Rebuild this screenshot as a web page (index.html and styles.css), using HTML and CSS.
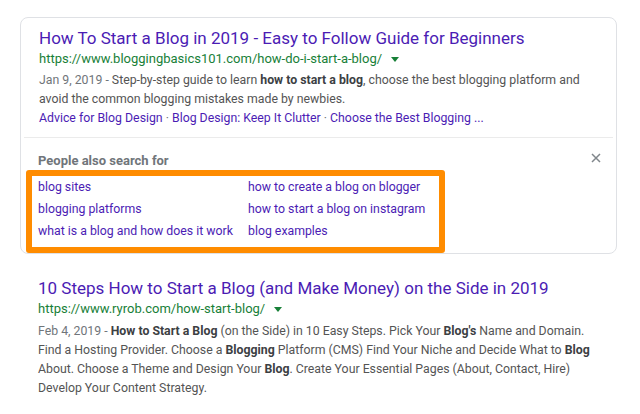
FILE: index.html
```html
<!DOCTYPE html>
<html lang="en">
<head>
<meta charset="utf-8">
<title>Search results</title>
<link rel="stylesheet" href="styles.css">
</head>
<body>
<div class="page">
  <div class="card">
    <div class="result first">
      <a class="title" href="#">How To Start a Blog in 2019 - Easy to Follow Guide for Beginners</a>
      <div class="url">https://www.bloggingbasics101.com/how-do-i-start-a-blog/<span class="caret"></span></div>
      <div class="snippet"><span class="date">Jan 9, 2019 - </span>Step-by-step guide to learn <b>how to start a blog</b>, choose the best blogging platform and avoid the common blogging mistakes made by newbies.</div>
      <div class="sitelinks"><a href="#">Advice for Blog Design</a><span class="dot"> · </span><a href="#">Blog Design: Keep It Clutter</a><span class="dot"> · </span><a href="#">Choose the Best Blogging ...</a></div>
    </div>
    <div class="divider"></div>
    <div class="pasf">
      <div class="pasf-head">
        <span class="pasf-title">People also search for</span>
        <svg class="close" width="10" height="10" viewBox="0 0 10 10"><path d="M1 1L9 9M9 1L1 9" stroke="#80868b" stroke-width="1.5" fill="none"/></svg>
      </div>
      <div class="highlight">
        <div class="pasf-grid">
          <a href="#">blog sites</a>
          <a href="#">how to create a blog on blogger</a>
          <a href="#">blogging platforms</a>
          <a href="#">how to start a blog on instagram</a>
          <a href="#">what is a blog and how does it work</a>
          <a href="#">blog examples</a>
        </div>
      </div>
    </div>
  </div>
  <div class="result second">
    <a class="title" href="#">10 Steps How to Start a Blog (and Make Money) on the Side in 2019</a>
    <div class="url">https://www.ryrob.com/how-start-blog/<span class="caret"></span></div>
    <div class="snippet"><span class="date">Feb 4, 2019 - </span><b>How to Start a Blog</b> (on the Side) in 10 Easy Steps. Pick Your <b>Blog's</b> Name and Domain. Find a Hosting Provider. Choose a <b>Blogging</b> Platform (CMS) Find Your Niche and Decide What to <b>Blog</b> About. Choose a Theme and Design Your <b>Blog</b>. Create Your Essential Pages (About, Contact, Hire) Develop Your Content Strategy.</div>
  </div>
</div>
</body>
</html>
```
FILE: styles.css
```css
* { box-sizing: border-box; }
html, body { margin: 0; padding: 0; background: #fff; }
body { font-family: Roboto, "Liberation Sans", Arial, sans-serif; }
a { text-decoration: none; color: #4b1cb4; }

.page { padding: 17px 0 0 20px; width: 640px; }

.card {
  width: 597px;
  border: 1px solid #dfe1e5;
  border-radius: 8px;
}

.result { padding: 0 18px; }
.result.first { padding-top: 9px; padding-bottom: 9px; }
.result.second { padding-top: 23px; }

.title {
  display: block;
  font-size: 17px;
  line-height: 22px;
  color: #4b1cb4;
  white-space: nowrap;
}

.url {
  font-size: 13px;
  line-height: 20px;
  color: #188038;
  display: flex;
  align-items: center;
}
.caret {
  width: 0; height: 0;
  margin-left: 9px;
  margin-top: 1px;
  border-left: 4px solid transparent;
  border-right: 4px solid transparent;
  border-top: 5px solid #188038;
}

.snippet {
  margin-top: 2px;
  font-size: 12.3px;
  line-height: 19px;
  color: #545454;
  width: 550px;
}
.second .snippet { margin-top: 3px; width: 560px; }
.snippet b { color: #3c4043; font-weight: 700; }
.date { color: #70757a; }

.sitelinks {
  font-size: 12.3px;
  line-height: 19px;
  white-space: nowrap;
}
.sitelinks a { color: #4b1cb4; }
.dot { color: #70757a; }

.divider {
  height: 1px;
  background: #ebebeb;
  margin: 0 3px;
}

.pasf { padding: 13px 0 0 5px; }
.pasf-head {
  display: flex;
  justify-content: space-between;
  align-items: center;
  padding: 0 15px 0 12px;
}
.pasf-title {
  font-size: 13px;
  line-height: 19px;
  font-weight: 700;
  color: #70757a;
}
.close { margin-top: -6px; }

.highlight {
  width: 419px;
  border: 6px solid #ff8c00;
  border-radius: 3px;
  padding: 0 0 5px 6px;
}
.pasf-grid {
  display: grid;
  grid-template-columns: 210px auto;
  font-size: 12.3px;
  line-height: 22px;
}
.pasf-grid a { color: #4b1cb4; white-space: nowrap; }
```
